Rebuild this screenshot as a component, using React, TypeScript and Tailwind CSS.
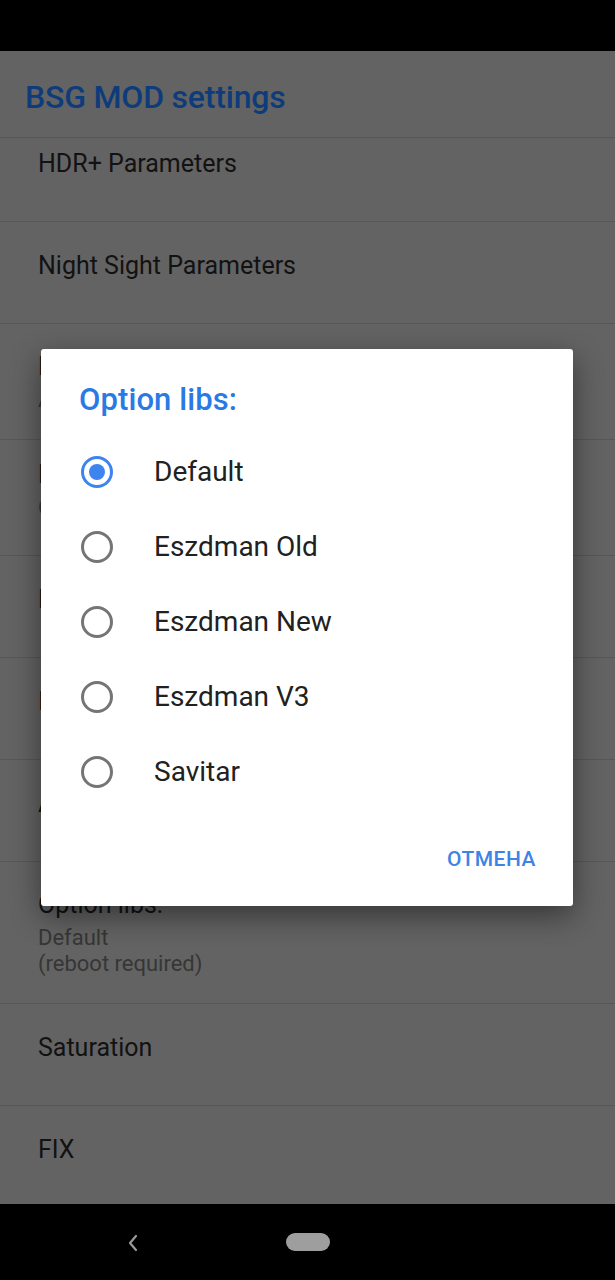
import React from "react";

const font = { fontFamily: "Roboto, 'Noto Sans', 'Liberation Sans', sans-serif" };

function Row({ title, sub, h, pt }: { title: string; sub?: string[]; h: string; pt: string }) {
  return (
    <div className={`${h} ${pt} border-b border-[#575757] pl-[38px] pr-4 shrink-0`}>
      <div className="text-[25px] leading-[28px] text-[#121212]">{title}</div>
      {sub && (
        <div className="mt-[6px]">
          {sub.map((s, i) => (
            <div key={i} className="text-[22px] leading-[26px] text-[#363636]">
              {s}
            </div>
          ))}
        </div>
      )}
    </div>
  );
}

function Radio({ checked }: { checked?: boolean }) {
  return checked ? (
    <div className="w-[32px] h-[32px] rounded-full border-[3px] border-[#3d84ef] flex items-center justify-center">
      <div className="w-[16px] h-[16px] rounded-full bg-[#3d84ef]" />
    </div>
  ) : (
    <div className="w-[32px] h-[32px] rounded-full border-[3px] border-[#757575]" />
  );
}

export default function App() {
  const options = ["Default", "Eszdman Old", "Eszdman New", "Eszdman V3", "Savitar"];
  return (
    <div className="relative w-[615px] h-[1280px] overflow-hidden bg-[#636363] flex flex-col" style={font}>
      <div className="h-[51px] bg-black shrink-0" />
      <div className="h-[87px] shrink-0 border-b border-[#575757] flex items-center pl-[25px] pt-[6px]">
        <span className="text-[32px] font-medium text-[#0e3c7a] tracking-[-0.2px]">BSG MOD settings</span>
      </div>
      <div className="flex-1 flex flex-col overflow-hidden">
        <Row title="HDR+ Parameters" h="h-[84px]" pt="pt-[12px]" />
        <Row title="Night Sight Parameters" h="h-[102px]" pt="pt-[30px]" />
        <Row title="Lens Parameters" sub={["Auto"]} h="h-[116px]" pt="pt-[29px]" />
        <Row title="Preview FPS" sub={["Camera default"]} h="h-[116px]" pt="pt-[21px]" />
        <Row title="Luma Noise" h="h-[102px]" pt="pt-[30px]" />
        <Row title="Image Sharpness" h="h-[102px]" pt="pt-[30px]" />
        <Row title="Additional settings" h="h-[102px]" pt="pt-[30px]" />
        <Row title="Option libs:" sub={["Default", "(reboot required)"]} h="h-[142px]" pt="pt-[29px]" />
        <Row title="Saturation" h="h-[102px]" pt="pt-[30px]" />
        <Row title="FIX" h="h-[102px]" pt="pt-[30px]" />
      </div>
      <div className="h-[76px] bg-black shrink-0 flex items-center justify-center relative">
        <svg className="absolute left-[126px] top-[29px]" width="14" height="20" viewBox="0 0 14 20">
          <path d="M10 3 L4 10 L10 17" fill="none" stroke="#9a9a9a" strokeWidth="2.2" strokeLinecap="round" strokeLinejoin="round" />
        </svg>
        <div className="w-[44px] h-[18px] rounded-full bg-[#9e9e9e]" />
      </div>

      <div className="absolute left-[41px] top-[349px] w-[532px] h-[557px] bg-white rounded-[3px] shadow-[0_10px_30px_rgba(0,0,0,0.45)] flex flex-col">
        <div className="pl-[38px] pt-[36px] text-[31px] leading-[30px] font-medium text-[#2a7ae6] tracking-[0.1px]">
          Option libs:
        </div>
        <div className="mt-[19px] flex flex-col">
          {options.map((o, i) => (
            <div key={o} className="h-[75px] flex items-center pl-[40px]">
              <Radio checked={i === 0} />
              <span className="ml-[41px] text-[28px] text-[#212121]">{o}</span>
            </div>
          ))}
        </div>
        <div className="flex-1 flex items-center justify-end pr-[37px] pt-[4px]">
          <span className="text-[21px] font-medium text-[#3d84e6] tracking-[0.5px]">ОТМЕНА</span>
        </div>
      </div>
    </div>
  );
}
